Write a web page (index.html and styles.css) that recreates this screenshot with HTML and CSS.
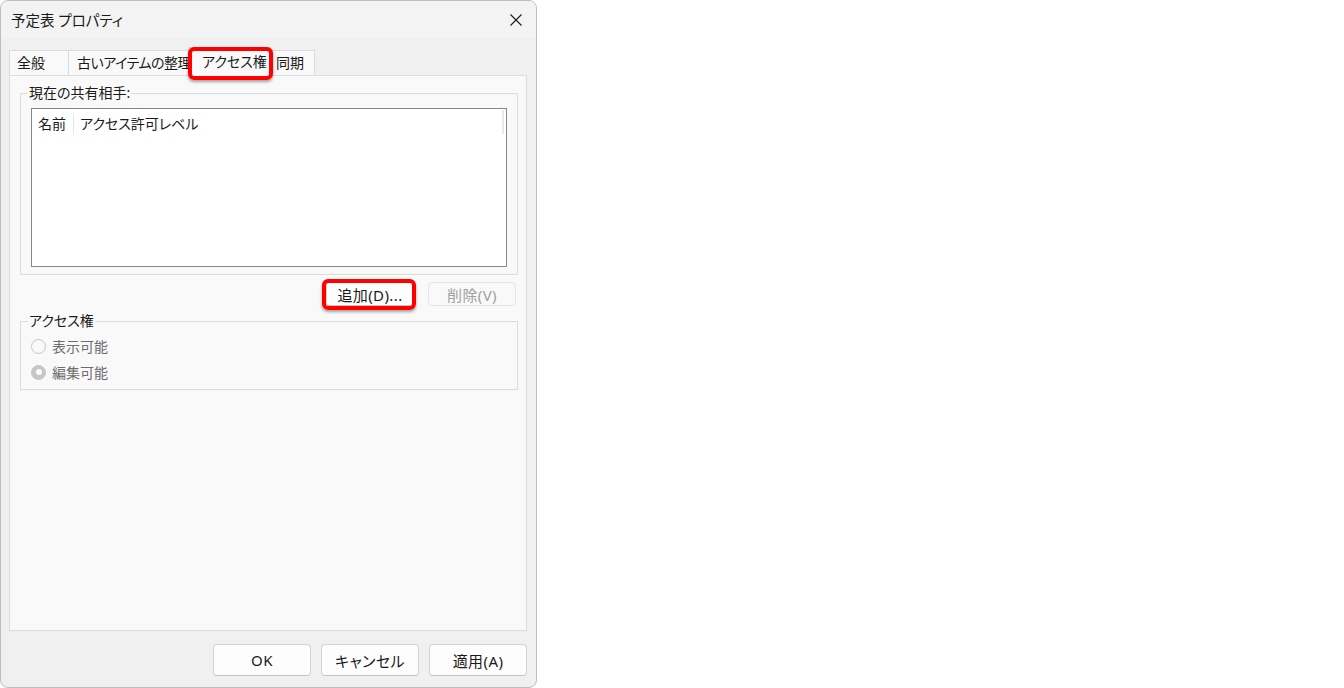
FILE: index.html
```html
<!DOCTYPE html>
<html lang="ja">
<head>
<meta charset="utf-8">
<title>予定表 プロパティ</title>
<link rel="stylesheet" href="styles.css">
</head>
<body>
<div class="window">
  <div class="titlebar">
    <span class="title">予定表 プロパティ</span>
    <span class="close">
      <svg width="12" height="12" viewBox="0 0 12 12"><path d="M0.5 0.5 L11.5 11.5 M11.5 0.5 L0.5 11.5" stroke="#1c1c1c" stroke-width="1.1" fill="none"/></svg>
    </span>
  </div>
  <div class="body">
    <div class="tabs">
      <div class="tab tab-general">全般</div>
      <div class="tab tab-archive">古いアイテムの整理</div>
      <div class="tab tab-selected">アクセス権<span class="highlight hl-tab"></span></div>
      <div class="tab tab-sync">同期</div>
    </div>
    <div class="panel">
      <fieldset class="group group-share">
        <legend>現在の共有相手:</legend>
        <div class="listview">
          <div class="lv-header">
            <div class="lv-col lv-col-name">名前</div>
            <div class="lv-col lv-col-level">アクセス許可レベル</div>
          </div>
        </div>
      </fieldset>
      <div class="action-row">
        <div class="btn btn-small">追加(D)...<span class="highlight hl-btn"></span></div>
        <div class="btn btn-small btn-disabled">削除(V)</div>
      </div>
      <fieldset class="group group-perm">
        <legend>アクセス権</legend>
        <div class="radio-row">
          <span class="radio"></span>
          <span class="radio-label">表示可能</span>
        </div>
        <div class="radio-row">
          <span class="radio radio-checked"></span>
          <span class="radio-label">編集可能</span>
        </div>
      </fieldset>
    </div>
    <div class="footer">
      <div class="btn btn-footer">OK</div>
      <div class="btn btn-footer">キャンセル</div>
      <div class="btn btn-footer">適用(A)</div>
    </div>
  </div>
</div>
</body>
</html>
```

FILE: styles.css
```css
* { box-sizing: border-box; }

body {
  margin: 0;
  background: #ffffff;
  font-family: "Noto Sans", "Noto Sans CJK JP", sans-serif;
  font-size: 14px;
  color: #1a1a1a;
  font-feature-settings: "palt";
}

.window {
  width: 537px;
  height: 688px;
  background: #f0f0f0;
  border: 1px solid #bdbdbd;
  border-radius: 8px;
  display: flex;
  flex-direction: column;
  overflow: hidden;
}

.titlebar {
  height: 37px;
  flex: none;
  display: flex;
  align-items: center;
  justify-content: space-between;
  padding-left: 10px;
  background: #f3f3f3;
}

.title {
  line-height: 20px;
  font-size: 14.5px;
}

.close {
  width: 40px;
  height: 37px;
  display: flex;
  align-items: center;
  justify-content: center;
}

.body {
  flex: 1;
  display: flex;
  flex-direction: column;
  padding: 9px 9px 0 8px;
}

.tabs {
  height: 28px;
  display: flex;
  align-items: flex-end;
  position: relative;
  z-index: 1;
}

.tab {
  height: 25px;
  line-height: 23px;
  padding-left: 7px;
  border: 1px solid #dadada;
  border-bottom: none;
  background: #f9f9f9;
  margin-right: -1px;
  white-space: nowrap;
  position: relative;
}

.tab-general { width: 60px; }
.tab-archive { width: 124px; padding-left: 8px; letter-spacing: -0.5px; }
.tab-selected {
  width: 82px;
  height: 29px;
  line-height: 27px;
  margin: 0 -2px -1px -3px;
  padding-left: 13px;
  border-color: #dadada;
  z-index: 2;
}
.tab-sync { width: 47px; padding-left: 7px; }

.highlight {
  position: absolute;
  border: 4px solid #ff0000;
  border-radius: 6px;
  box-shadow: 0 2px 3px rgba(0, 0, 0, 0.35);
  pointer-events: none;
}

.hl-tab {
  top: -1px;
  left: -1px;
  width: 85px;
  height: 33px;
}

.hl-btn {
  top: -4px;
  left: -5px;
  right: -3px;
  bottom: -5px;
}

.panel {
  flex: 1;
  background: #f9f9f9;
  border: 1px solid #dcdcdc;
  padding: 8px 8px 0 10px;
  display: flex;
  flex-direction: column;
}

.group {
  margin: 0;
  border: 1px solid #dcdcdc;
  padding: 0 10px 7px 10px;
}

.group legend {
  margin-left: -3px;
  padding: 0 1px;
  line-height: 18px;
  color: #1a1a1a;
}

.listview {
  margin-top: 6px;
  height: 159px;
  background: #ffffff;
  border: 1px solid #868686;
}

.lv-header {
  height: 26px;
  display: flex;
  align-items: flex-start;
}

.lv-col {
  height: 22px;
  line-height: 22px;
  margin-top: 4px;
  border-right: 1px solid #e4e4e4;
  white-space: nowrap;
}

.lv-col-name {
  width: 42px;
  padding-left: 6px;
}

.lv-col-level {
  flex: 1;
  padding-left: 6px;
  margin-right: 2px;
  border-right: 2px solid #e8e8e8;
  height: 24px;
  margin-top: 1px;
  line-height: 27px;
}

.action-row {
  display: flex;
  justify-content: flex-end;
  gap: 14px;
  margin-top: 7px;
  padding-right: 2px;
}

.btn {
  display: flex;
  align-items: center;
  justify-content: center;
  background: #fdfdfd;
  border: 1px solid #d3d3d3;
  border-bottom-color: #c4c4c4;
  border-radius: 4px;
  color: #1a1a1a;
  position: relative;
  font-size: 15px;
  letter-spacing: 0.4px;
}

.btn-small {
  width: 88px;
  height: 24px;
}

.btn-disabled {
  color: #a0a0a0;
  background: #f9f9f9;
  border-color: #e5e5e5;
}

.group-perm {
  margin-top: 6px;
  padding: 0 10px 4px 10px;
}

.radio-row {
  height: 26px;
  display: flex;
  align-items: center;
  gap: 6px;
}

.radio-row:first-of-type { margin-top: 3px; }

.radio {
  width: 15px;
  height: 15px;
  border-radius: 50%;
  border: 1px solid #c6c6c6;
  background: #f9f9f9;
  flex: none;
  display: flex;
  align-items: center;
  justify-content: center;
}

.radio-checked {
  background: #c6c6c6;
}

.radio-checked::after {
  content: "";
  width: 6px;
  height: 6px;
  border-radius: 50%;
  background: #fbfbfb;
}

.radio-label {
  color: #6d6d6d;
}

.footer {
  height: 56px;
  flex: none;
  display: flex;
  justify-content: flex-end;
  align-items: flex-start;
  gap: 10px;
  padding-top: 13px;
  padding-right: 0;
}

.btn-footer {
  width: 98px;
  height: 32px;
}
```
